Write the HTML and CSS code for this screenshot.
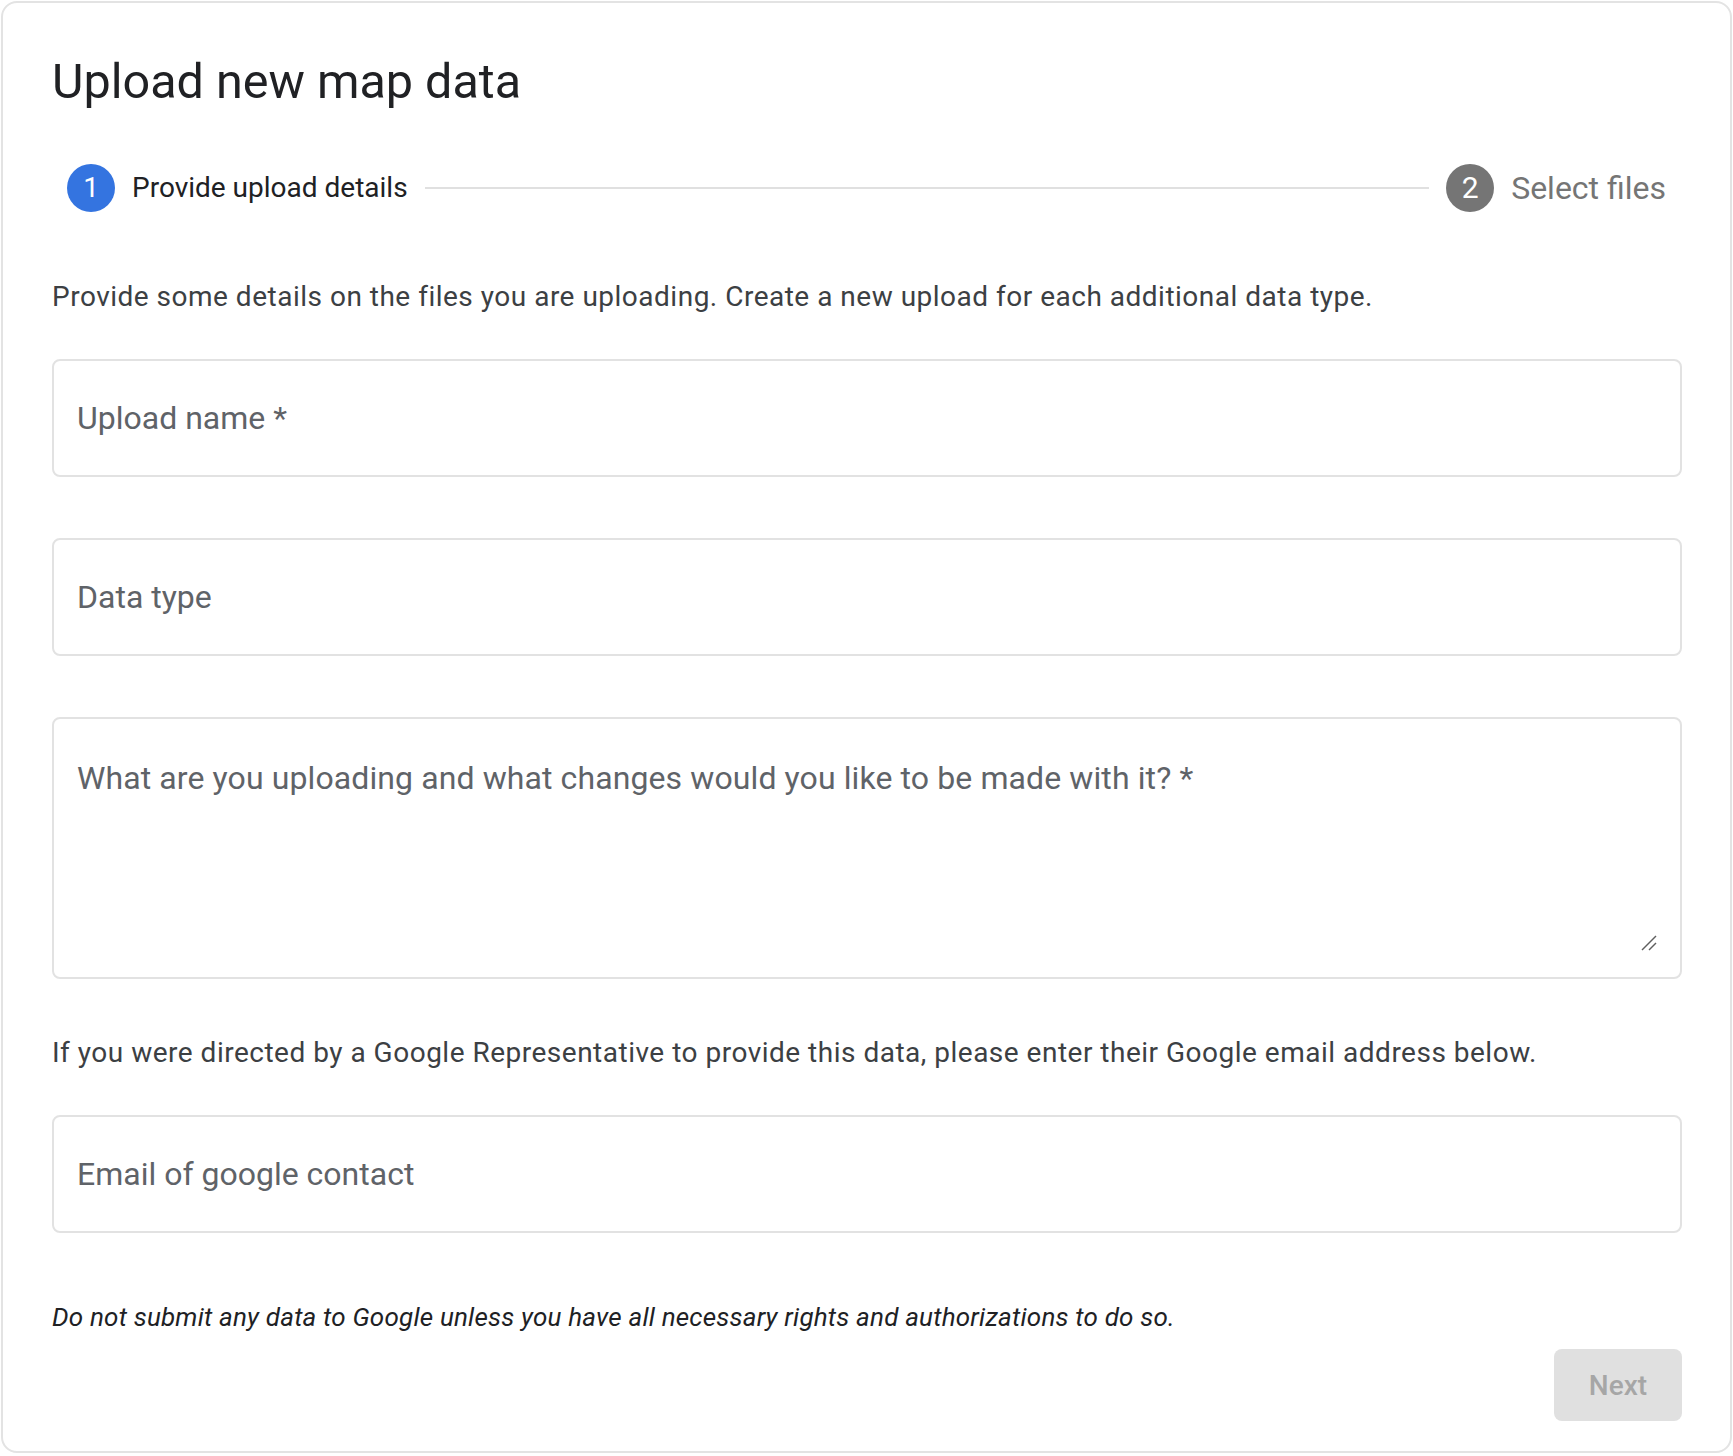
FILE: index.html
```html
<!DOCTYPE html>
<html lang="en">
<head>
    <meta charset="UTF-8">
    <meta name="viewport" content="width=device-width, initial-scale=1.0">
    <title>Upload new map data</title>
    <link rel="stylesheet" href="styles.css">
</head>
<body>
    <div class="card">
        <h1 class="title">Upload new map data</h1>

        <div class="stepper">
            <div class="step active">
                <span class="step-num">1</span>
                <span class="step-label">Provide upload details</span>
            </div>
            <div class="step-line"></div>
            <div class="step">
                <span class="step-num">2</span>
                <span class="step-label">Select files</span>
            </div>
        </div>

        <p class="intro">Provide some details on the files you are uploading. Create a new upload for each additional data type.</p>

        <form class="fields">
            <input class="field" type="text" placeholder="Upload name *">
            <input class="field" type="text" placeholder="Data type">
            <div class="field-area">
                <textarea placeholder="What are you uploading and what changes would you like to be made with it? *"></textarea>
                <svg class="grip" width="16" height="16" viewBox="0 0 16 16">
                    <line x1="1" y1="15" x2="15" y2="1" />
                    <line x1="8" y1="15" x2="15" y2="8" />
                </svg>
            </div>
        </form>

        <p class="note">If you were directed by a Google Representative to provide this data, please enter their Google email address below.</p>
        <input class="field" type="email" placeholder="Email of google contact">

        <p class="disclaimer">Do not submit any data to Google unless you have all necessary rights and authorizations to do so.</p>

        <div class="actions">
            <button class="btn-next" disabled>Next</button>
        </div>
    </div>
</body>
</html>
```

FILE: styles.css
```css
html, body {
    margin: 0;
    background: #fff;
}

body {
    font-family: Roboto, "Liberation Sans", sans-serif;
    color: #202124;
}

.card {
    margin: 1px;
    border: 2px solid #e3e3e3;
    border-radius: 16px;
    padding: 51px 48px 30px 49px;
}

.title {
    margin: 0;
    font-size: 48.5px;
    line-height: 56px;
    font-weight: 400;
    color: #202124;
}

/* stepper */
.stepper {
    display: flex;
    align-items: center;
    gap: 17px;
    height: 48px;
    margin-top: 54px;
    padding: 0 16px 0 15px;
}

.step {
    display: flex;
    align-items: center;
    gap: 17px;
}

.step-num {
    display: flex;
    align-items: center;
    justify-content: center;
    width: 48px;
    height: 48px;
    border-radius: 50%;
    background: #757575;
    color: #fff;
    font-size: 30px;
    line-height: 48px;
}

.step-label {
    font-size: 32px;
    line-height: 36px;
    color: #757575;
}

.step.active .step-num {
    background: #3474e0;
    font-size: 28px;
}

.step.active .step-label {
    font-size: 28px;
    line-height: 32px;
    color: #202124;
}

.step-line {
    flex: 1;
    height: 2px;
    background: #e0e0e0;
}

/* text */
.intro,
.note {
    margin: 0;
    font-size: 28px;
    line-height: 40px;
    letter-spacing: 0.5px;
    color: #3c4043;
}

.intro {
    margin-top: 65px;
}

.note {
    margin-top: 54px;
}

.disclaimer {
    margin: 66px 0 0;
    font-size: 26px;
    line-height: 36px;
    font-style: italic;
    letter-spacing: 0.2px;
    color: #202124;
}

/* fields */
.fields {
    display: flex;
    flex-direction: column;
    gap: 61px;
    margin-top: 42px;
}

.field {
    display: block;
    box-sizing: border-box;
    width: 100%;
    height: 118px;
    margin: 0;
    padding: 0 23px;
    border: 2px solid #e2e2e2;
    border-radius: 8px;
    background: #fff;
    font-family: Roboto, "Liberation Sans", sans-serif;
    font-size: 32px;
    color: #202124;
    outline: none;
}

.note + .field {
    margin-top: 42px;
}

.field::placeholder,
.field-area textarea::placeholder {
    color: #5f6368;
    opacity: 1;
}

.field-area {
    position: relative;
    box-sizing: border-box;
    height: 262px;
    padding: 39px 23px 26px 23px;
    border: 2px solid #e2e2e2;
    border-radius: 8px;
}

.field-area textarea {
    display: block;
    box-sizing: border-box;
    width: 100%;
    height: 193px;
    margin: 0;
    padding: 0;
    border: none;
    resize: none;
    outline: none;
    font-family: Roboto, "Liberation Sans", sans-serif;
    font-size: 32px;
    line-height: 40px;
    letter-spacing: 0.1px;
    color: #202124;
}

.grip {
    position: absolute;
    right: 23px;
    bottom: 26px;
}

.grip line {
    stroke: #5f5f5f;
    stroke-width: 1.4;
}

/* actions */
.actions {
    display: flex;
    justify-content: flex-end;
    margin-top: 14px;
}

.btn-next {
    width: 128px;
    height: 72px;
    border: none;
    border-radius: 8px;
    background: #e0e0e0;
    color: #a6a6a6;
    font-family: Roboto, "Liberation Sans", sans-serif;
    font-size: 28px;
    font-weight: 500;
}
```
